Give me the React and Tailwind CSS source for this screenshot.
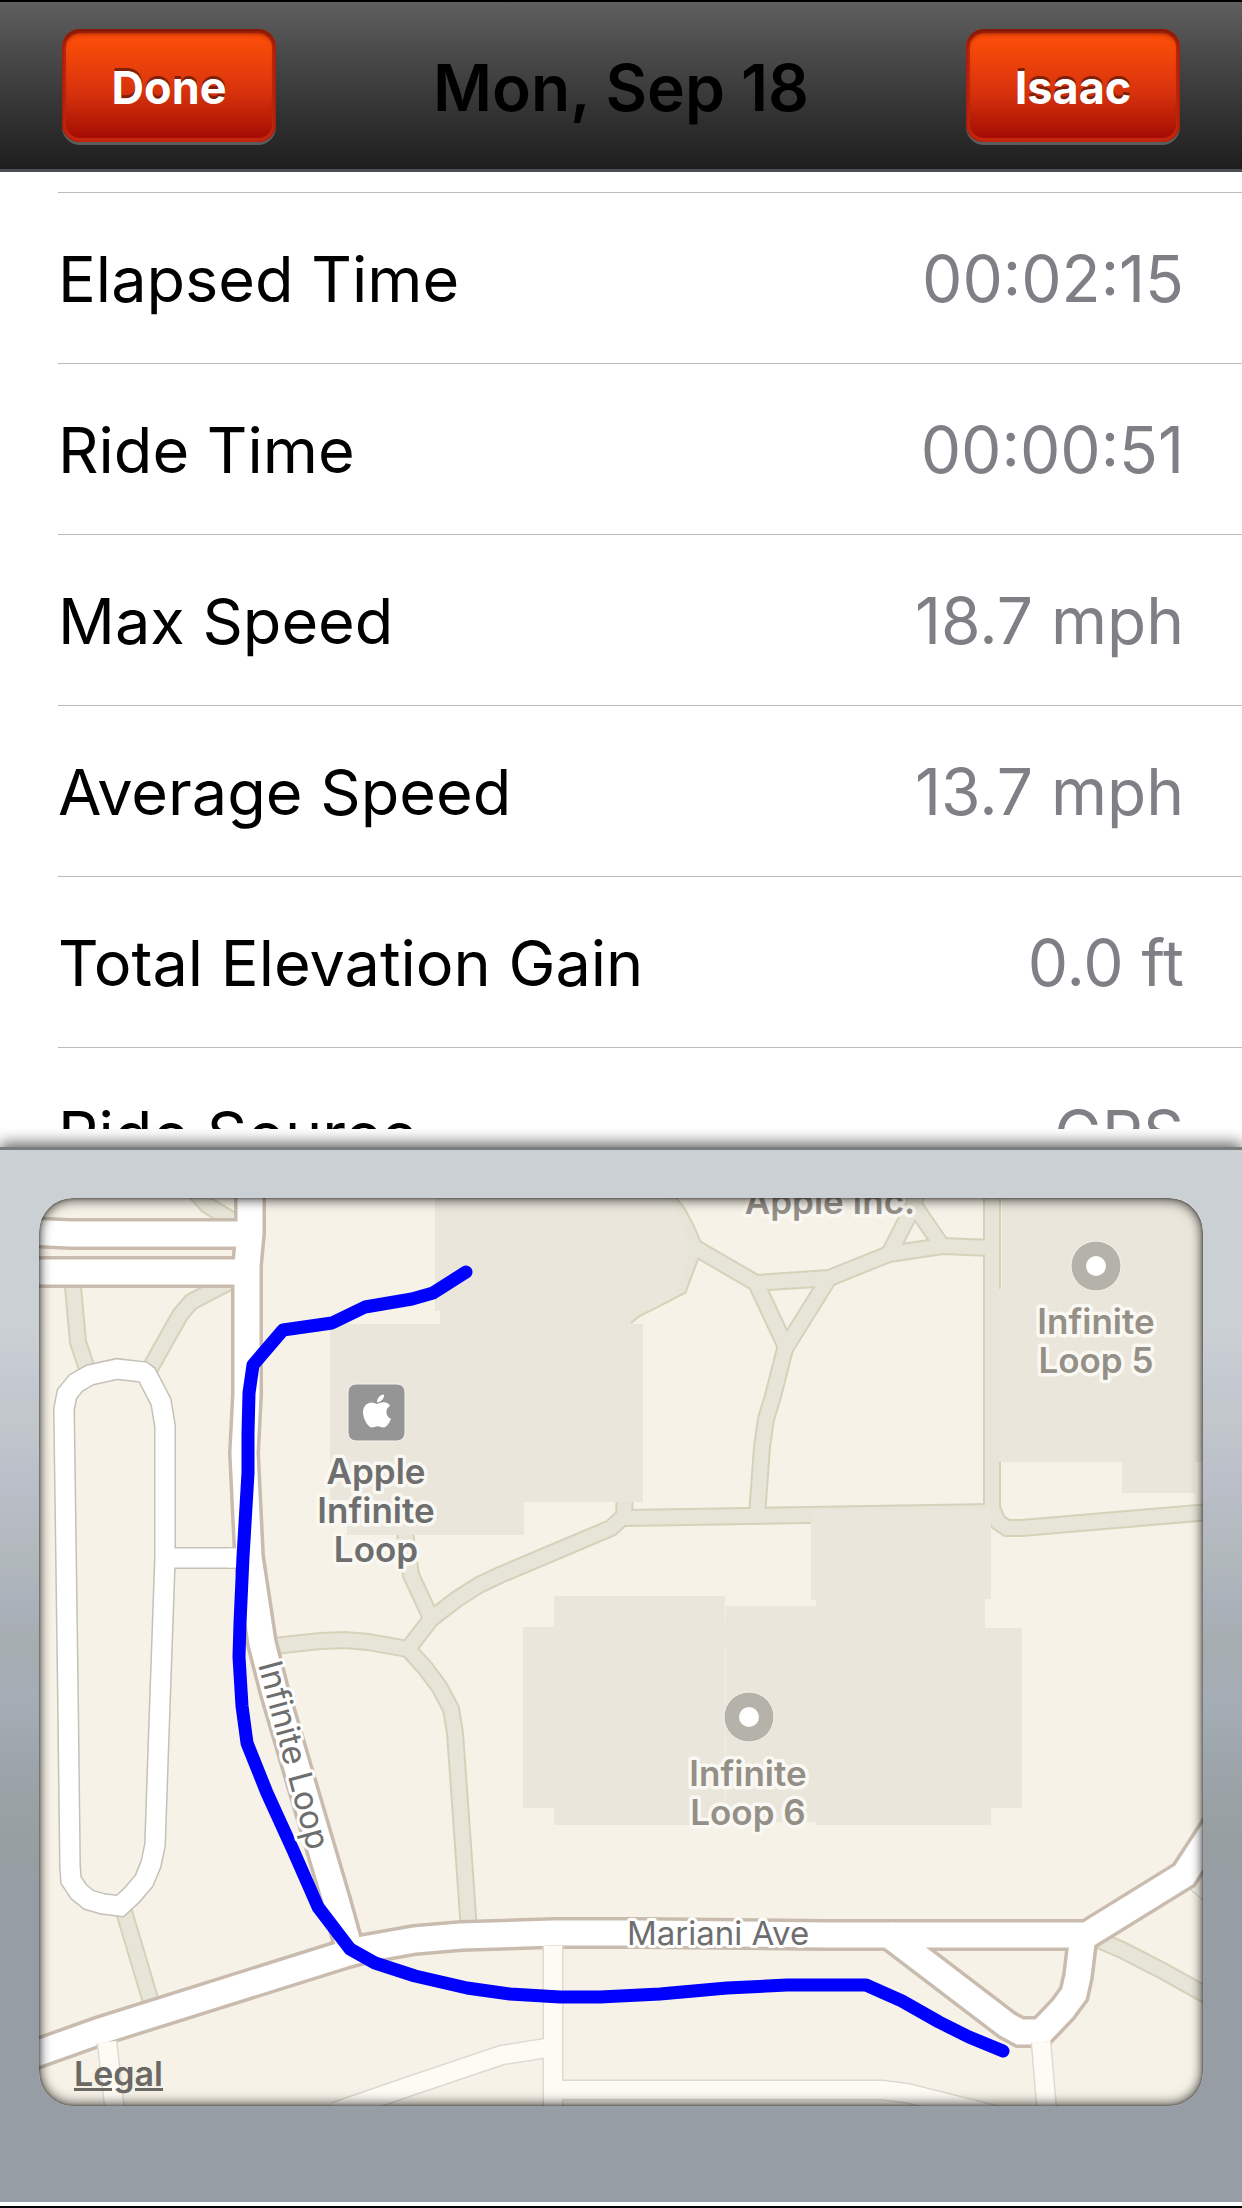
import React from "react";
import { FaApple } from "react-icons/fa";

const stats = [
  { label: "Elapsed Time", value: "00:02:15" },
  { label: "Ride Time", value: "00:00:51" },
  { label: "Max Speed", value: "18.7 mph" },
  { label: "Average Speed", value: "13.7 mph" },
  { label: "Total Elevation Gain", value: "0.0 ft" },
  { label: "Ride Source", value: "GPS" },
];

const footpaths = [
  "M185 1180L207 1205L240 1225",
  "M73 1275L73 1287L78 1342L88 1372",
  "M236 1279L208 1293L191 1302L180 1315L148 1372",
  "M660 1190L670 1203L678 1213L686 1228L694 1247L679 1287L634 1310L622 1320",
  "M694 1247L756 1283L829 1278L889 1254L942 1246L992 1248",
  "M889 1254L914 1205L918 1185",
  "M942 1246L914 1205",
  "M829 1278L786 1347L756 1283",
  "M786 1345L773 1396L766 1419L762 1447L757 1516",
  "M625 1518L992 1512",
  "M992 1190L992 1508L998 1522L1007 1528L1022 1528L1210 1512",
  "M625 1490L624 1516L611 1528L500 1575L479 1585L457 1599L431 1619L408 1649L426 1669L440 1688L451 1709L455 1733L469 1930",
  "M404 1525L411 1575L430 1616",
  "M265 1647L320 1641L345 1640L368 1642L408 1649",
  "M122 1905L151 2002",
  "M1092 1937L1122 1950L1161 1970L1215 2000",
];

const buildings = [
  "M435 1190H660L678 1210L689 1247L684 1275L672 1298L648 1311H631V1324H643V1502H524V1535H347V1500H330V1324H440V1311H435Z",
  "M1002 1190H1210V1462H1195V1493H1122V1462H999V1289H1002Z",
  "M554 1596H725V1606H816V1600H811V1510H991V1599H985V1628H1022V1808H991V1825H816V1822H725V1825H554V1808H523V1627H554Z",
];

const serviceRoads = [
  "M107 2042L115 2112",
  "M553 1946V2112",
  "M553 2047L502 2055L413 2085L335 2112",
  "M553 2090H882L907 2093L1010 2119",
  "M1041 2042L1047 2112",
];

const streets = [
  "M64 1409L67 1394L76 1383L90 1375L117 1369L143 1372L147 1375L161 1402L165 1426V1558L160 1700L155 1845L151 1864L144 1881L132 1895L120 1906L103 1904L89 1900L79 1892L71 1880L70 1866L68 1700Z",
  "M165 1558H250",
];

const mainRoads = [
  "M30 1232L70 1234H250",
  "M30 1272H250",
  "M250 1190V1233L247 1265V1395L244 1453L249 1557L262 1643L274 1690L336 1900L350 1950",
  "M30 2056L100 2031L345 1954L364 1949L415 1940L461 1936L553 1933H640L825 1935H1087L1184 1875L1225 1812",
  "M885 1932L1007 2025L1020 2032H1041L1063 2009L1074 1994L1078 1976L1083 1935",
];

const route =
  "M466 1272L433 1293L412 1299L365 1307L332 1323L283 1330L253 1365L249 1393L248 1433L248 1473L243 1557L240 1623L239 1657L242 1706L247 1743L267 1793L293 1850L318 1907L350 1949L375 1963L415 1976L467 1988L510 1994L560 1997H600L660 1994L727 1988L787 1985H866L902 2001L939 2022L969 2037L1003 2051";

const Roads = ({ paths, edge, fill, outer, inner }) => (
  <g fill="none">
    {paths.map((d) => (
      <path key={d} d={d} stroke={edge} strokeWidth={outer} />
    ))}
    {paths.map((d) => (
      <path key={d} d={d} stroke={fill} strokeWidth={inner} />
    ))}
  </g>
);

const Pin = ({ x, y }) => (
  <g>
    <circle cx={x} cy={y} r="25" fill="#b5b2aa" stroke="#f4f2ec" />
    <circle cx={x} cy={y} r="10" fill="#fff" />
  </g>
);

const MapLabel = ({ x, y, lines, color = "#959087" }) => (
  <text
    textAnchor="middle"
    fontSize="35"
    fontWeight="600"
    fill={color}
    stroke="#faf8f3"
    strokeWidth="7"
    strokeLinejoin="round"
    paintOrder="stroke"
  >
    {lines.map((line, i) => (
      <tspan key={line} x={x} y={y + i * 39}>
        {line}
      </tspan>
    ))}
  </text>
);

const StreetName = ({ x, y, rotate = 0, children }) => (
  <text
    x={x}
    y={y}
    transform={`rotate(${rotate} ${x} ${y})`}
    textAnchor="middle"
    fontSize="33"
    fill="#6e6e6e"
    stroke="#fff"
    strokeWidth="6"
    strokeLinejoin="round"
    paintOrder="stroke"
  >
    {children}
  </text>
);

const RideMap = () => (
  <svg
    viewBox="39 1198 1164 908"
    className="block w-full"
    role="img"
    aria-label="Ride map"
  >
    <rect x="39" y="1198" width="1164" height="908" fill="#f6f2e7" />
    <Roads
      paths={footpaths}
      edge="#d6d2b9"
      fill="#e6e5d8"
      outer={18}
      inner={14}
    />
    <g fill="#eae6dc">
      {buildings.map((d) => (
        <path key={d} d={d} />
      ))}
    </g>
    <path d="M725 1596V1623M725 1646V1825" stroke="#f0ede3" />
    <path d="M1189 1888L1210 1906" stroke="#c5c1b9" />
    <Roads
      paths={streets}
      edge="#c5c1b9"
      fill="#fff"
      outer={22}
      inner={19}
    />
    <Roads
      paths={mainRoads}
      edge="#c9bcae"
      fill="#fff"
      outer={32}
      inner={25}
    />
    <path d="M228 1558H252" stroke="#fff" strokeWidth="19" />
    <Roads
      paths={serviceRoads}
      edge="#dddad2"
      fill="#fefbf4"
      outer={21}
      inner={18}
    />
    <path
      d={route}
      fill="none"
      stroke="#0000ff"
      strokeWidth="13"
      strokeLinecap="round"
      strokeLinejoin="round"
    />

    <Pin x={1096} y={1266} />
    <Pin x={749} y={1717} />
    <rect
      x="348"
      y="1384"
      width="57"
      height="57"
      rx="8"
      fill="#959595"
      stroke="#f4f2ec"
    />
    <FaApple x="358" y="1392" size={38} color="#fff" />

    <MapLabel
      x={376}
      y={1484}
      lines={["Apple", "Infinite", "Loop"]}
      color="#6e6e6e"
    />
    <MapLabel x={1096} y={1334} lines={["Infinite", "Loop 5"]} />
    <MapLabel x={748} y={1786} lines={["Infinite", "Loop 6"]} />
    <MapLabel x={830} y={1214} lines={["Apple Inc."]} />
    <StreetName x={718} y={1945}>
      Mariani Ave
    </StreetName>
    <StreetName x={283} y={1758} rotate={75}>
      Infinite Loop
    </StreetName>
  </svg>
);

const NavButton = ({ children }) => (
  <button
    type="button"
    className="h-[113px] w-[214px] rounded-[18px] bg-linear-to-b from-[#fa4c08] from-10% via-[#d9330d] via-55% to-[#a60c04] to-95% pt-1 text-[45px] font-bold text-white shadow-[inset_0_4px_5px_#7d1a08,inset_0_0_0_4px_#c4260f,0_3px_0_#5c5c5c] [text-shadow:0_-3px_0_#80200a]"
  >
    {children}
  </button>
);

const App = () => {
  return (
    <div className="flex h-screen flex-col bg-white font-['Inter','Liberation_Sans',sans-serif]">
      <header className="flex h-[172px] shrink-0 items-center justify-between border-t-2 border-b-3 border-t-black border-b-[#4b4e55] bg-linear-to-b from-[#5f5f5f] to-[#1e1e1e] px-[62px]">
        <NavButton>Done</NavButton>
        <h1 className="pt-1 text-[64px] font-semibold text-black">
          Mon, Sep 18
        </h1>
        <NavButton>Isaac</NavButton>
      </header>

      <dl className="mb-[18px] min-h-0 flex-1 overflow-y-auto pl-[58px] [scrollbar-width:none]">
        <div className="h-[21px] border-b border-[#bcbbc1]" />
        {stats.map((stat) => (
          <div
            key={stat.label}
            className="flex h-[171px] items-center justify-between border-b border-[#bcbbc1] pt-[2px] pr-[58px]"
          >
            <dt className="text-[63px] text-black">{stat.label}</dt>
            <dd className="text-[64px] text-[#7f7f85]">{stat.value}</dd>
          </div>
        ))}
      </dl>

      <main className="shrink-0 border-t-3 border-[#7c7c7c] bg-[linear-gradient(180deg,#cbd0d4_0%,#cbd0d4_17%,#c3c7d0_23%,#c3c8cb_25%,#bbbfca_31%,#b1b8bb_39%,#abb1bb_43%,#a6adb0_47%,#a5adb6_52%,#9da5ac_58%,#989fa1_65%,#969da4_70%,#969da4_100%)] px-[39px] pt-[48px] pb-[96px] shadow-[0_-4px_14px_rgba(0,0,0,0.6)]">
        <div className="relative overflow-hidden rounded-[34px]">
          <RideMap />
          <div className="pointer-events-none absolute inset-0 rounded-[34px] shadow-[inset_0_3px_12px_rgba(0,0,0,0.5),inset_0_-3px_12px_rgba(0,0,0,0.5),inset_0_0_3px_rgba(0,0,0,0.5)]" />
          <a
            href="#legal"
            className="absolute bottom-[10px] left-[35px] text-[34px] leading-[44px] font-semibold text-[#6a6964] underline"
          >
            Legal
          </a>
        </div>
      </main>
      <div className="h-[6px] shrink-0 border-b-2 border-black bg-white" />
    </div>
  );
};

export default App;
